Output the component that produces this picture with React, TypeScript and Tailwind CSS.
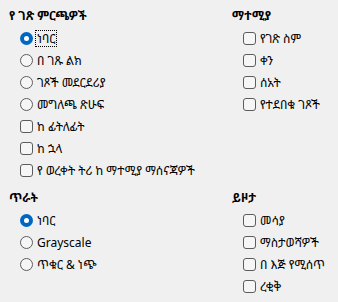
import React from "react";

type Item = {
  label: string;
  kind: "radio" | "check";
  checked?: boolean;
  focused?: boolean;
};

function Radio({ checked }: { checked?: boolean }) {
  return checked ? (
    <span className="flex h-[13px] w-[13px] shrink-0 items-center justify-center rounded-full bg-[#0067c0]">
      <span className="h-[5px] w-[5px] rounded-full bg-white" />
    </span>
  ) : (
    <span className="h-[13px] w-[13px] shrink-0 rounded-full border border-[#5c5c5c] bg-[#f6f6f6]" />
  );
}

function Check() {
  return (
    <span className="h-[13px] w-[13px] shrink-0 rounded-[3px] border border-[#5c5c5c] bg-[#f6f6f6]" />
  );
}

function Row({ item }: { item: Item }) {
  return (
    <div className="flex h-[22px] items-center gap-[3px] pl-[11px]">
      {item.kind === "radio" ? <Radio checked={item.checked} /> : <Check />}
      <span
        className={`px-[1px] leading-[15px] ${
          item.focused ? "outline outline-1 outline-dotted outline-black" : ""
        }`}
      >
        {item.label}
      </span>
    </div>
  );
}

function Section({ title, items }: { title: string; items: Item[] }) {
  return (
    <div className="flex flex-col">
      <div className="flex h-[22px] items-center font-bold">{title}</div>
      {items.map((it) => (
        <Row key={it.label} item={it} />
      ))}
    </div>
  );
}

export default function App() {
  return (
    <div
      className="h-[302px] w-[338px] bg-[#f0f0f0] pt-[5px] pl-[9px] text-[12px] text-black"
      style={{
        fontFamily:
          '"Noto Sans", "Noto Sans Ethiopic", "Abyssinica SIL", "DejaVu Sans", sans-serif',
      }}
    >
      <div className="grid grid-cols-[223px_1fr] gap-y-[6px]">
        {/* page options */}
        <Section
          title="የ ገጽ ምርጫዎች"
          items={[
            { label: "ነባር", kind: "radio", checked: true, focused: true },
            { label: "በ ገጹ ልክ", kind: "radio" },
            { label: "ገጾች መደርደሪያ", kind: "radio" },
            { label: "መግለጫ ጽሁፍ", kind: "radio" },
            { label: "ከ ፊትለፊት", kind: "check" },
            { label: "ከ ኋላ", kind: "check" },
            { label: "የ ወረቀት ትሪ ከ ማተሚያ ማሰናጃዎች", kind: "check" },
          ]}
        />
        {/* printer */}
        <Section
          title="ማተሚያ"
          items={[
            { label: "የገጽ ስም", kind: "check" },
            { label: "ቀን", kind: "check" },
            { label: "ሰአት", kind: "check" },
            { label: "የተደበቁ ገጾች", kind: "check" },
          ]}
        />
        {/* quality */}
        <Section
          title="ጥራት"
          items={[
            { label: "ነባር", kind: "radio", checked: true },
            { label: "Grayscale", kind: "radio" },
            { label: "ጥቁር & ነጭ", kind: "radio" },
          ]}
        />
        {/* contents */}
        <Section
          title="ይዞታ"
          items={[
            { label: "መሳያ", kind: "check" },
            { label: "ማስታወሻዎች", kind: "check" },
            { label: "በ እጅ የሚሰጥ", kind: "check" },
            { label: "ረቂቅ", kind: "check" },
          ]}
        />
      </div>
    </div>
  );
}
